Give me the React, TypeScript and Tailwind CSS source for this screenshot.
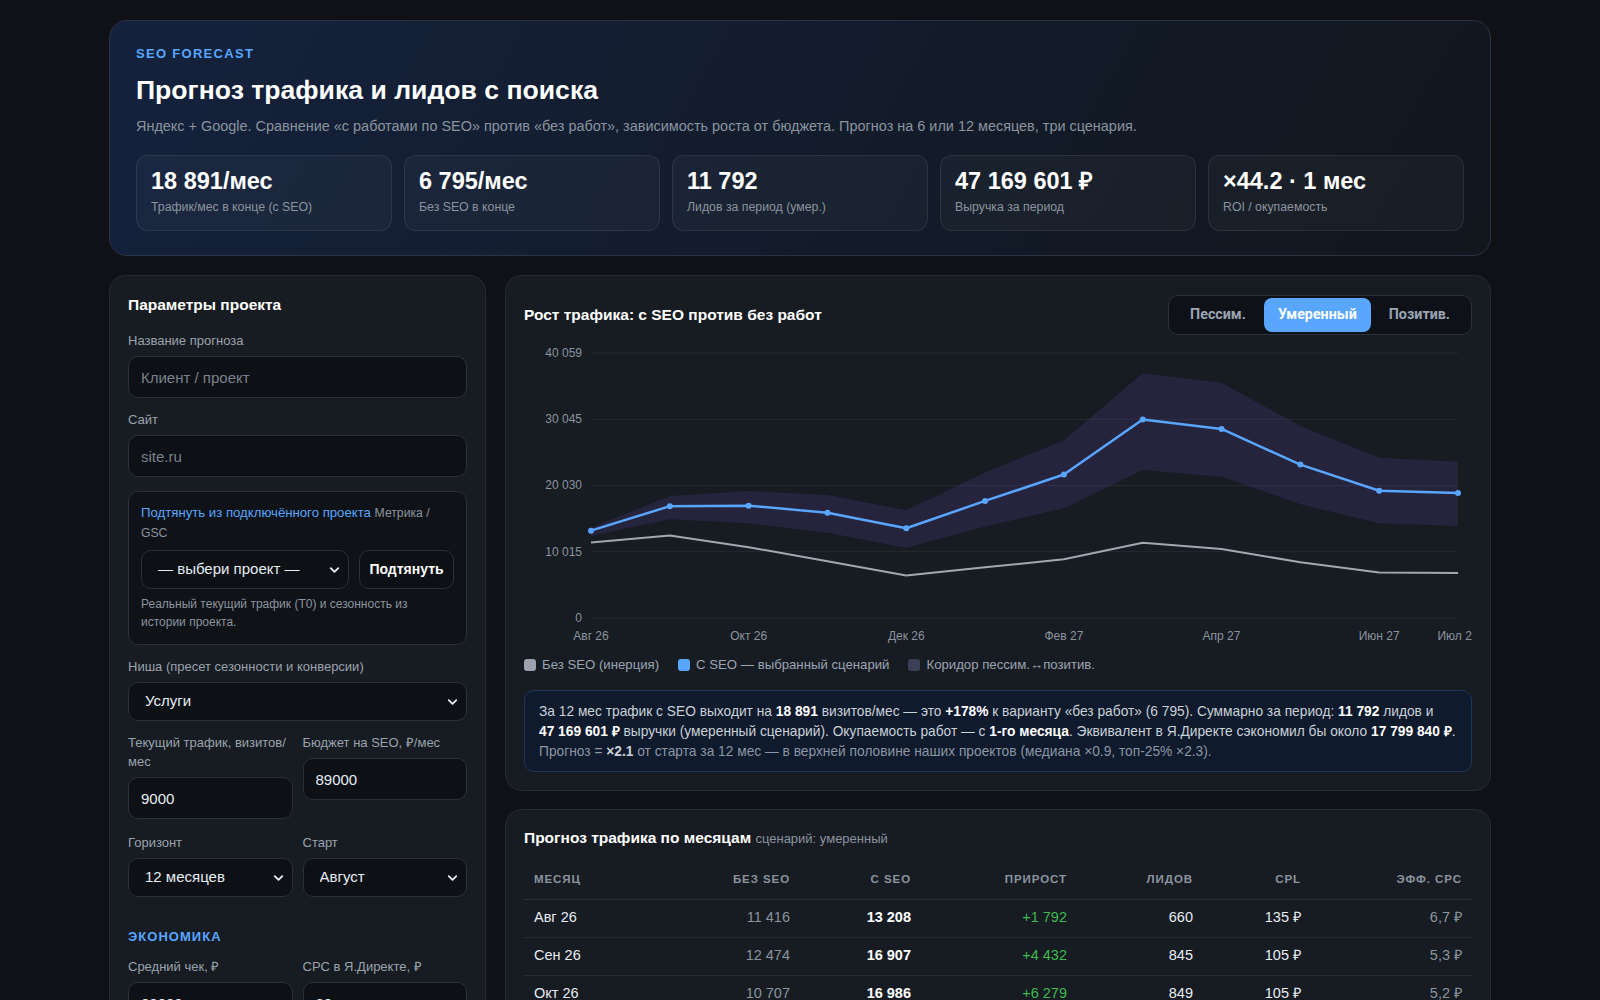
import React from "react";
import { ChevronDown } from "lucide-react";

const fmt = (n: number) => n.toString().replace(/\B(?=(\d{3})+(?!\d))/g, "\u00a0");

const months = ["Авг 26", "Сен 26", "Окт 26", "Ноя 26", "Дек 26", "Янв 27", "Фев 27", "Мар 27", "Апр 27", "Май 27", "Июн 27", "Июл 27"];
const seo = [13208, 16907, 16986, 15900, 13560, 17700, 21690, 30000, 28580, 23188, 19230, 18891];
const base = [11416, 12474, 10707, 8590, 6425, 7660, 8890, 11370, 10430, 8430, 6890, 6795];
const upper = [13650, 18443, 19199, 18594, 16281, 21995, 26863, 36992, 35571, 29025, 24233, 23628];
const lower = [12396, 14920, 14316, 12895, 10627, 13832, 16583, 22373, 21360, 17188, 14316, 13908];

const W = 948;
const H = 300;
const X0 = 67;
const X1 = 934;
const YT = 10;
const YB = 275;
const MAX = 40059;
const xp = (i: number) => X0 + ((X1 - X0) * i) / 11;
const yp = (v: number) => YB - ((YB - YT) * v) / MAX;

function Chart() {
  const ticks = [0, 10015, 20030, 30045, 40059];
  const band =
    upper.map((v, i) => `${i === 0 ? "M" : "L"}${xp(i)},${yp(v)}`).join(" ") +
    " " +
    lower
      .map((v, i) => ({ v, i }))
      .reverse()
      .map(({ v, i }) => `L${xp(i)},${yp(v)}`)
      .join(" ") +
    " Z";
  const line = (arr: number[]) => arr.map((v, i) => `${i === 0 ? "M" : "L"}${xp(i)},${yp(v)}`).join(" ");
  const xl = [0, 2, 4, 6, 8, 10, 11];
  return (
    <svg width={W} height={H} viewBox={`0 0 ${W} ${H}`} className="block overflow-hidden">
      {ticks.map((t) => (
        <g key={t}>
          <line x1={X0} x2={X1} y1={yp(t)} y2={yp(t)} stroke="#252a33" strokeWidth={1} />
          <text x={58} y={yp(t)} textAnchor="end" dominantBaseline="central" fill="#8b949e" fontSize={12} fontFamily="Liberation Sans, Arial, sans-serif">
            {fmt(t)}
          </text>
        </g>
      ))}
      <path d={band} fill="rgba(139,92,246,0.13)" />
      <path d={line(base)} fill="none" stroke="#a3a8b0" strokeWidth={2} strokeLinejoin="round" />
      <path d={line(seo)} fill="none" stroke="#58a6ff" strokeWidth={2.5} strokeLinejoin="round" />
      {seo.map((v, i) => (
        <circle key={i} cx={xp(i)} cy={yp(v)} r={3} fill="#58a6ff" />
      ))}
      {xl.map((i) => (
        <text key={i} x={xp(i)} y={293} textAnchor="middle" dominantBaseline="central" fill="#8b949e" fontSize={12} fontFamily="Liberation Sans, Arial, sans-serif">
          {months[i]}
        </text>
      ))}
    </svg>
  );
}

function Label({ children }: { children: React.ReactNode }) {
  return <div className="mb-[6px] text-[13px] leading-[19px] text-[#9aa3ad]">{children}</div>;
}

function Input({ placeholder, value }: { placeholder?: string; value?: string }) {
  return (
    <input
      className="h-[42px] w-full rounded-[10px] border border-[#2b3039] bg-[#0d1015] px-3 text-[15px] text-[#e6edf3] outline-none placeholder:text-[#7a828c]"
      placeholder={placeholder}
      defaultValue={value}
    />
  );
}

function Select({ value }: { value: string }) {
  return (
    <div className="relative w-full">
      <select className="h-[39px] w-full appearance-none rounded-[10px] border border-[#2b3039] bg-[#0d1015] pl-4 pr-8 text-[15px] text-[#e6edf3] outline-none">
        <option>{value}</option>
      </select>
      <ChevronDown className="pointer-events-none absolute right-[7px] top-1/2 h-[15px] w-[15px] -translate-y-1/2 text-[#e6edf3]" strokeWidth={3} />
    </div>
  );
}

function Stat({ value, label }: { value: string; label: string }) {
  return (
    <div className="h-[76px] rounded-[12px] border border-[rgba(255,255,255,0.08)] bg-[rgba(255,255,255,0.03)] px-[14px] pt-[11px]">
      <div className="text-[23.5px] font-bold leading-[28px] text-white">{value}</div>
      <div className="mt-[4px] text-[12.3px] leading-[16px] text-[#8b949e]">{label}</div>
    </div>
  );
}

export default function App() {
  const rows = months.map((m, i) => {
    const leads = Math.round(seo[i] * 0.05);
    const delta = i === 1 ? 4432 : seo[i] - base[i];
    return {
      m,
      base: fmt(base[i]),
      seo: fmt(seo[i]),
      delta: "+" + fmt(delta),
      leads: fmt(leads),
      cpl: fmt(Math.round(89000 / leads)) + " ₽",
      cpc: (89000 / seo[i]).toFixed(1).replace(".", ",") + " ₽",
    };
  });

  return (
    <div className="min-h-screen bg-[#0f1117] font-['Liberation_Sans',Arial,sans-serif] text-[#e6edf3]">
      <div className="mx-auto w-[1382px] pb-10 pt-5">
        {/* Header */}
        <div className="rounded-[18px] border border-[#2a3343] bg-[linear-gradient(120deg,#14223d_0%,#131c2c_50%,#12161d_100%)] px-[26px] pb-6 pt-6">
          <div className="text-[13px] font-bold leading-[17px] tracking-[0.1em] text-[#58a6ff]">SEO FORECAST</div>
          <h1 className="mt-[12px] text-[26.6px] font-bold leading-[32px] text-white">Прогноз трафика и лидов с поиска</h1>
          <p className="mt-[10px] text-[14.45px] leading-[20px] text-[#8b949e]">
            Яндекс + Google. Сравнение «с работами по SEO» против «без работ», зависимость роста от бюджета. Прогноз на 6 или 12 месяцев, три сценария.
          </p>
          <div className="mt-[19px] grid grid-cols-5 gap-3">
            <Stat value="18 891/мес" label="Трафик/мес в конце (с SEO)" />
            <Stat value="6 795/мес" label="Без SEO в конце" />
            <Stat value="11 792" label="Лидов за период (умер.)" />
            <Stat value="47 169 601 ₽" label="Выручка за период" />
            <Stat value="×44.2 · 1 мес" label="ROI / окупаемость" />
          </div>
        </div>

        <div className="mt-[19px] flex items-start gap-[19px]">
          {/* Left panel */}
          <aside className="w-[377px] shrink-0 rounded-[16px] border border-[#262b34] bg-[#171b22] p-[18px]">
            <h2 className="text-[15.5px] font-bold leading-[22px] text-white">Параметры проекта</h2>
            <div className="mt-[15px]">
              <Label>Название прогноза</Label>
              <Input placeholder="Клиент / проект" />
            </div>
            <div className="mt-3">
              <Label>Сайт</Label>
              <Input placeholder="site.ru" />
            </div>
            <div className="mt-[14px] rounded-[10px] border border-[#2b3039] bg-[#0f1217] px-3 pb-[13px] pt-[11px]">
              <div className="text-[13.2px] leading-[20px]">
                <span className="text-[#58a6ff]">Подтянуть из подключённого проекта</span>{" "}
                <span className="text-[12.2px] text-[#8b949e]">Метрика / GSC</span>
              </div>
              <div className="mt-[7px] flex gap-[10px]">
                <div className="flex-1">
                  <Select value="— выбери проект —" />
                </div>
                <button className="h-[39px] w-[95px] shrink-0 rounded-[10px] border border-[#2b3039] bg-[#0d1015] text-[14px] font-bold text-white">
                  Подтянуть
                </button>
              </div>
              <div className="mt-[7px] text-[12px] leading-[17.5px] text-[#8b949e]">Реальный текущий трафик (T0) и сезонность из истории проекта.</div>
            </div>
            <div className="mt-3">
              <Label>Ниша (пресет сезонности и конверсии)</Label>
              <Select value="Услуги" />
            </div>
            <div className="mt-3 grid grid-cols-2 gap-[10px]">
              <div>
                <Label>
                  Текущий трафик, визитов/<wbr />мес
                </Label>
                <Input value="9000" />
              </div>
              <div>
                <Label>Бюджет на SEO, ₽/мес</Label>
                <Input value="89000" />
              </div>
            </div>
            <div className="mt-[14px] grid grid-cols-2 gap-[10px]">
              <div>
                <Label>Горизонт</Label>
                <Select value="12 месяцев" />
              </div>
              <div>
                <Label>Старт</Label>
                <Select value="Август" />
              </div>
            </div>
            <div className="mt-[30px] text-[13px] font-bold leading-[20px] tracking-[0.08em] text-[#58a6ff]">ЭКОНОМИКА</div>
            <div className="mt-[10px] grid grid-cols-2 gap-[10px]">
              <div>
                <Label>Средний чек, ₽</Label>
                <Input value="20000" />
              </div>
              <div>
                <Label>CPC в Я.Директе, ₽</Label>
                <Input value="80" />
              </div>
            </div>
            <div className="mt-3 grid grid-cols-2 gap-[10px]">
              <div>
                <Label>Конверсия в лид, %</Label>
                <Input value="5" />
              </div>
              <div>
                <Label>Конверсия в продажу, %</Label>
                <Input value="20" />
              </div>
            </div>
          </aside>

          {/* Right column */}
          <div className="flex min-w-0 flex-1 flex-col gap-[18px]">
            <section className="rounded-[16px] border border-[#262b34] bg-[#171b22] p-[18px]">
              <div className="mt-[1px] flex h-[40px] items-center justify-between">
                <h2 className="text-[15.5px] font-bold leading-[22px] text-white">Рост трафика: с SEO против без работ</h2>
                <div className="flex h-[40px] items-center rounded-[10px] border border-[#2a2f38] bg-[#0e1117] p-[3px] font-['Roboto',sans-serif]">
                  <button className="h-[34px] rounded-[8px] px-[18px] text-[14.3px] font-bold text-[#9aa4b2]">Пессим.</button>
                  <button className="h-[34px] rounded-[8px] bg-[#58a6ff] px-[14px] text-[14.3px] font-bold text-white">Умеренный</button>
                  <button className="h-[34px] rounded-[8px] px-[18px] text-[14.3px] font-bold text-[#9aa4b2]">Позитив.</button>
                </div>
              </div>
              <div className="mt-[8px]">
                <Chart />
              </div>
              <div className="mt-3 flex items-center gap-[19px] text-[13.2px] leading-[20px] text-[#9aa4b2]">
                <div className="flex items-center gap-[6px]">
                  <span className="h-[12px] w-[12px] rounded-[3px] bg-[#9ca3af]" />
                  Без SEO (инерция)
                </div>
                <div className="flex items-center gap-[6px]">
                  <span className="h-[12px] w-[12px] rounded-[3px] bg-[#58a6ff]" />
                  С SEO — выбранный сценарий
                </div>
                <div className="flex items-center gap-[6px]">
                  <span className="h-[12px] w-[12px] rounded-[3px] bg-[#3a4055]" />
                  Коридор пессим.↔позитив.
                </div>
              </div>
              <div className="mt-[15px] rounded-[10px] border border-[#1e3658] bg-[#0f1a2c] px-[14px] pb-[9px] pt-[11px] text-[13.75px] leading-[20px] text-[#c9d1d9]">
                За 12 мес трафик с SEO выходит на <b className="text-white">18 891</b> визитов/мес — это <b className="text-white">+178%</b> к варианту «без работ» (6 795). Суммарно за период: <b className="text-white">11 792</b> лидов и
                <br />
                <b className="text-white">47 169 601 ₽</b> выручки (умеренный сценарий). Окупаемость работ — с <b className="text-white">1-го месяца</b>. Эквивалент в Я.Директе сэкономил бы около <b className="text-white">17 799 840 ₽</b>.
                <br />
                <span className="text-[#8b96a5]">
                  Прогноз = <b className="text-[#c9d1d9]">×2.1</b> от старта за 12 мес — в верхней половине наших проектов (медиана ×0.9, топ-25% ×2.3).
                </span>
              </div>
            </section>

            <section className="rounded-[16px] border border-[#262b34] bg-[#171b22] p-[18px]">
              <h2 className="text-[15.5px] font-bold leading-[20px] text-white">
                Прогноз трафика по месяцам <span className="text-[13px] font-normal text-[#8b949e]">сценарий: умеренный</span>
              </h2>
              <table className="mt-3 w-full table-fixed border-collapse">
                <colgroup>
                  <col className="w-[146px]" />
                  <col className="w-[130px]" />
                  <col className="w-[121px]" />
                  <col className="w-[156px]" />
                  <col className="w-[126px]" />
                  <col className="w-[108px]" />
                  <col className="w-[161px]" />
                </colgroup>
                <thead>
                  <tr className="h-[38px] border-b border-[#2b313a] text-[11.5px] font-bold uppercase tracking-[0.08em] text-[#8b949e]">
                    <th className="px-[10px] text-left">Месяц</th>
                    <th className="px-[10px] text-right">Без SEO</th>
                    <th className="px-[10px] text-right">С SEO</th>
                    <th className="px-[10px] text-right">Прирост</th>
                    <th className="px-[10px] text-right">Лидов</th>
                    <th className="px-[10px] text-right">CPL</th>
                    <th className="px-[10px] text-right">Эфф. CPC</th>
                  </tr>
                </thead>
                <tbody>
                  {rows.map((r) => (
                    <tr key={r.m} className="h-[38px] border-b border-[#252a33] text-[14.5px]">
                      <td className="px-[10px] text-left text-[#e6edf3]">{r.m}</td>
                      <td className="px-[10px] text-right text-[#8b949e]">{r.base}</td>
                      <td className="px-[10px] text-right font-bold text-white">{r.seo}</td>
                      <td className="px-[10px] text-right text-[#3fb950]">{r.delta}</td>
                      <td className="px-[10px] text-right text-[#e6edf3]">{r.leads}</td>
                      <td className="px-[10px] text-right text-[#e6edf3]">{r.cpl}</td>
                      <td className="px-[10px] text-right text-[#8b949e]">{r.cpc}</td>
                    </tr>
                  ))}
                </tbody>
              </table>
            </section>
          </div>
        </div>
      </div>
    </div>
  );
}
